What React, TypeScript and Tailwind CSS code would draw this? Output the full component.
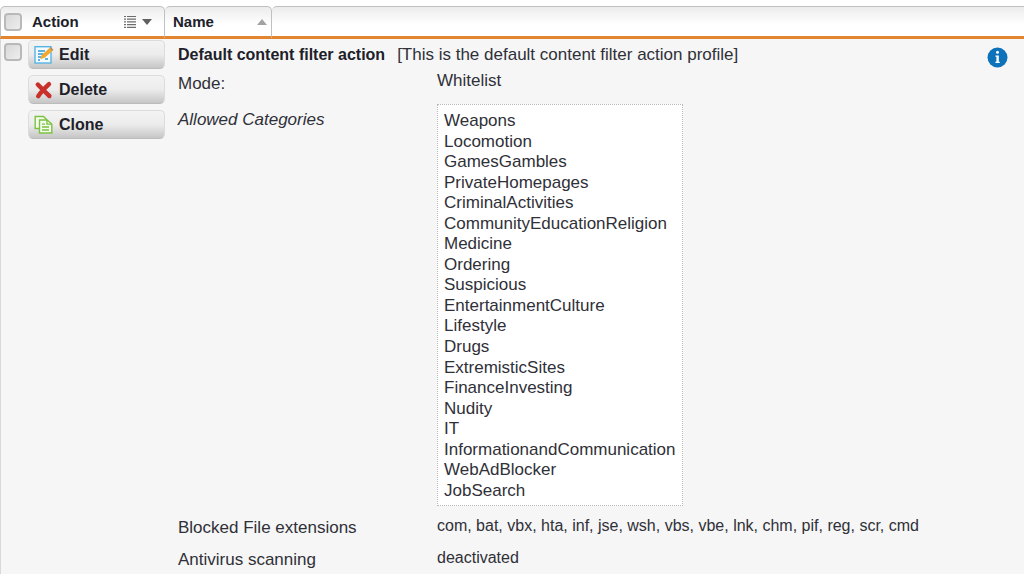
import type { ReactNode } from "react";

const categories = [
  "Weapons",
  "Locomotion",
  "GamesGambles",
  "PrivateHomepages",
  "CriminalActivities",
  "CommunityEducationReligion",
  "Medicine",
  "Ordering",
  "Suspicious",
  "EntertainmentCulture",
  "Lifestyle",
  "Drugs",
  "ExtremisticSites",
  "FinanceInvesting",
  "Nudity",
  "IT",
  "InformationandCommunication",
  "WebAdBlocker",
  "JobSearch",
];

function EditIcon() {
  return (
    <svg width="20" height="20" viewBox="0 0 20 20" aria-hidden="true">
      <rect x="1" y="1.7" width="16" height="16.3" fill="#f4fbff" stroke="#58b4e4" strokeWidth="1.4" />
      <path d="M4 6h7M4 9h5.5M4 12h3.5M4 15h2M11 14h3" stroke="#2f9bd6" strokeWidth="1.5" />
      <path d="M6.2 14.2l1.6-4L15.4 3l3 3-7.7 6.8z" fill="#f2a92c" />
      <path d="M15.4 3l1.2-1.1 2.9 2.9L18.4 6z" fill="#b98a55" />
    </svg>
  );
}

function DeleteIcon() {
  return (
    <svg width="20" height="20" viewBox="0 0 20 20" aria-hidden="true">
      <path d="M3.8 4.6C7 8 11.5 12.5 15.4 16M15 4.2C11.5 7.5 7 12 4.2 16.2" stroke="#c9302a" strokeWidth="4.4" strokeLinecap="round" fill="none" />
    </svg>
  );
}

function CloneIcon() {
  return (
    <svg width="20" height="20" viewBox="0 0 20 20" aria-hidden="true">
      <path d="M5.5 13.5H1.2V1.5h8.3l3.5 3.5" fill="#f4fcee" stroke="#7cc142" strokeWidth="1.4" />
      <path d="M5.5 5h7.5l4.8 4v9H5.5z" fill="#f4fcee" stroke="#7cc142" strokeWidth="1.4" />
      <path d="M13 5v4.2h4.7M8 9.2h3M8 12h7M8 15h7" fill="none" stroke="#7cc142" strokeWidth="1.3" />
    </svg>
  );
}

function ActionButton({ icon, children }: { icon: ReactNode; children: ReactNode }) {
  return (
    <button
      type="button"
      className="flex h-[29px] w-full items-center gap-[5px] rounded-[5px] border border-[#dcdcdc] border-b-[#bcbcbc] bg-linear-to-b from-[#f3f3f3] via-[#ececec] to-[#c6c6c6] pl-[5px] text-left text-base font-bold text-[#202028]"
    >
      {icon}
      {children}
    </button>
  );
}

function Check({ label }: { label: string }) {
  return (
    <input
      type="checkbox"
      aria-label={label}
      className="block size-[18px] shrink-0 appearance-none rounded-[4px] border-2 border-[#b9b9b9] bg-linear-to-br from-[#d8d8d8] to-[#eeeeee] checked:bg-[#8a8a8a]"
    />
  );
}

export default function App() {
  return (
    <main className="bg-white pt-[6px] font-['Liberation_Sans',Arial,sans-serif] text-[17px] leading-5 text-[#303038]">
      <table className="w-full table-fixed border-separate border-spacing-0">
        <colgroup>
          <col className="w-[165px]" />
          <col className="w-[107px]" />
          <col />
        </colgroup>
        <thead className="text-left text-[15px] text-[#202028]">
          <tr>
            <th scope="col" className="h-[33px] rounded-t-[5px] border border-b-3 border-[#c0c0c0] border-b-[#e3852f] bg-linear-to-b from-[#ececec] to-white to-60% p-0">
              <div className="flex items-center pr-3 pl-[3px]">
                <Check label="Select all" />
                <span className="pl-[10px]">Action</span>
                <button type="button" aria-label="Action menu" className="ml-auto flex items-center gap-[6px]">
                  <svg width="12" height="14" viewBox="0 0 12 14" aria-hidden="true">
                    <path d="M0 1.5h2M3 1.5h9M0 4.2h2M3 4.2h9M0 6.9h2M3 6.9h9M0 9.6h2M3 9.6h9M0 12.3h2M3 12.3h9" stroke="#6c6c6c" strokeWidth="1.2" />
                  </svg>
                  <svg width="10" height="6" viewBox="0 0 10 6" aria-hidden="true">
                    <path d="M0 0h10L5 6z" fill="#606060" />
                  </svg>
                </button>
              </div>
            </th>
            <th scope="col" className="rounded-t-[5px] border border-b-3 border-l-0 border-[#c0c0c0] border-b-[#e3852f] bg-linear-to-b from-[#ececec] to-white to-60% p-0">
              <button type="button" className="flex w-full items-center justify-between pr-1 pl-2">
                <span>Name</span>
                <svg width="10" height="6" viewBox="0 0 10 6" aria-hidden="true">
                  <path d="M0 6h10L5 0z" fill="#a3a3a3" />
                </svg>
              </button>
            </th>
            <td className="rounded-tl-[5px] border-t border-b-3 border-t-[#c0c0c0] border-b-[#e3852f] bg-linear-to-b from-[#ececec] to-white to-60%" />
          </tr>
        </thead>
        <tbody>
          <tr className="bg-[#f6f6f6] align-top">
            <td className="border-l border-[#d8d8d8] p-0">
              <div className="flex pt-px pl-[3px]">
                <div className="w-6 shrink-0 pt-[3px]">
                  <Check label="Select default content filter action" />
                </div>
                <div className="flex grow flex-col gap-[6px]">
                  <ActionButton icon={<EditIcon />}>Edit</ActionButton>
                  <ActionButton icon={<DeleteIcon />}>Delete</ActionButton>
                  <ActionButton icon={<CloneIcon />}>Clone</ActionButton>
                </div>
              </div>
            </td>
            <td colSpan={2} className="pt-[6px] pr-4 pb-1 pl-[13px]">
              <div className="flex items-start">
                <p className="grow">
                  <strong className="mr-3 text-base leading-5 text-[#202028]">Default content filter action</strong>
                  [This is the default content filter action profile]
                </p>
                <button type="button" aria-label="Information" className="mt-[2px] size-[21px] shrink-0">
                  <svg width="21" height="21" viewBox="0 0 21 21" aria-hidden="true">
                    <circle cx="10.5" cy="10.5" r="10" fill="#0d72b9" />
                    <circle cx="10.5" cy="5.3" r="1.5" fill="#fff" />
                    <path d="M8.5 8.5h3.3v6.3h1v1.2H8.4v-1.2h1V9.7h-.9z" fill="#fff" />
                  </svg>
                </button>
              </div>
              <dl className="grid grid-cols-[259px_1fr]">
                <dt className="pt-[6px]">Mode:</dt>
                <dd className="pt-[3px]">Whitelist</dd>
                <dt className="pt-4 italic">Allowed Categories</dt>
                <dd className="pt-[10px]">
                  <ul className="flex h-[402px] w-fit flex-col justify-between border border-dotted border-[#b8b8b8] bg-white px-[6px] pt-[6px] pb-1">
                    {categories.map((name) => (
                      <li key={name}>{name}</li>
                    ))}
                  </ul>
                </dd>
                <dt className="pt-3">Blocked File extensions</dt>
                <dd className="pt-[10px] text-base leading-5">com, bat, vbx, hta, inf, jse, wsh, vbs, vbe, lnk, chm, pif, reg, scr, cmd</dd>
                <dt className="pt-3">Antivirus scanning</dt>
                <dd className="pt-[10px] text-base leading-5">deactivated</dd>
              </dl>
            </td>
          </tr>
        </tbody>
      </table>
    </main>
  );
}
